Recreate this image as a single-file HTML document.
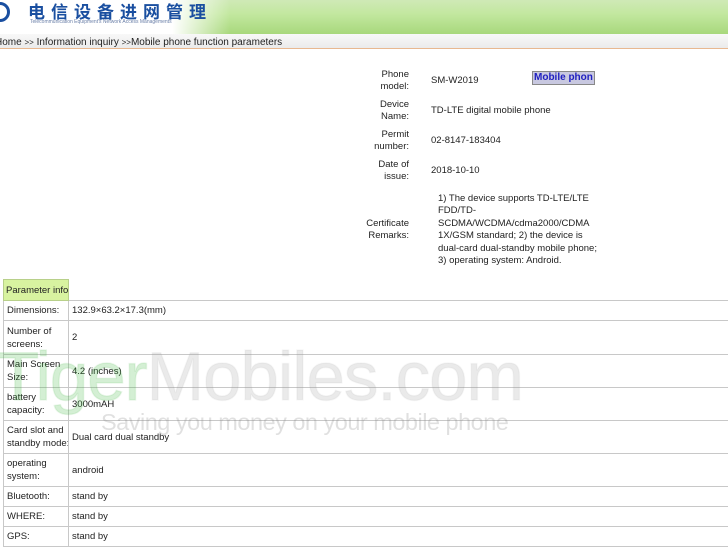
<!DOCTYPE html>
<html><head><meta charset="utf-8"><style>
body{margin:0;width:728px;height:548px;overflow:hidden;background:#fff;font-family:"Liberation Sans",sans-serif;font-size:9.5px;color:#222;position:relative}
.hdr{position:absolute;left:0;top:0;width:728px;height:34px;background:linear-gradient(to bottom,#cfe9b6,#c3e8a0 40%,#a8d87c);}
.hdrw{position:absolute;left:0;top:0;width:230px;height:34px;background:linear-gradient(to right,#fff 75%,rgba(255,255,255,0));}
.logo{position:absolute;left:-10px;top:2px;width:20px;height:20px;border:3px solid #1a4fa0;border-radius:50%;box-sizing:border-box}
.cn{position:absolute;left:28px;top:1px;font-family:"Noto Sans CJK SC",sans-serif;font-weight:bold;color:#1a4fa0;font-size:17px;letter-spacing:6px;line-height:20px}
.en{position:absolute;left:30px;top:19px;font-size:5px;color:#6a7fa8;font-family:"Liberation Sans",sans-serif}
.bc{position:absolute;left:-5px;top:34px;width:740px;height:14px;background:linear-gradient(#f8f8f8,#ebebeb);border-bottom:1px solid #e8b890;font-size:10px;line-height:17px;white-space:nowrap}
.bc span{font-size:8px}
.info{position:absolute;left:360px;top:66px;border-collapse:collapse}
.info td{padding:0;font-size:9.5px;line-height:12.5px;vertical-align:middle}
.info td.l{text-align:right;width:49px;padding-right:22px;height:30px}
.mp{position:absolute;left:532px;top:71px;background:#c8c8e0;border:1px solid #888;color:#2020c0;font-weight:bold;font-size:10px;padding:0 1px;line-height:12px}
table.p{position:absolute;left:3px;top:279px;border-collapse:collapse;width:740px;table-layout:fixed}
table.p td{border:1px solid #c8c8c8;padding:0 3px;font-size:9.5px;line-height:13px;overflow:hidden}
.hd{background:#d8f3a0;border:1px solid #b8d08a!important;height:20px}
.wm{position:absolute;left:-3px;top:337px;font-family:"Liberation Sans",sans-serif;font-size:69px;letter-spacing:-1px;color:rgba(60,180,60,0.22);line-height:80px;white-space:nowrap;-webkit-text-stroke:1.5px rgba(60,180,60,0.1)}
.wm b{font-weight:normal;color:rgba(150,150,150,0.2);-webkit-text-stroke:1.5px rgba(150,150,150,0.08)}
.ws{position:absolute;left:101px;top:409px;font-family:"Liberation Sans",sans-serif;font-size:23.5px;color:rgba(130,130,130,0.25);white-space:nowrap;letter-spacing:-0.5px}
</style></head><body>
<div class="hdr"></div><div class="hdrw"></div>
<div class="logo"></div>
<div class="cn">电信设备进网管理</div>
<div class="en">Telecommunication Equipment's Network Access Managements</div>
<div class="bc">Home <span>&gt;&gt;</span> Information inquiry <span>&gt;&gt;</span>Mobile phone function parameters</div>
<table class="info">
<tr><td class="l">Phone<br>model:</td><td>SM-W2019</td></tr>
<tr><td class="l">Device<br>Name:</td><td>TD-LTE digital mobile phone</td></tr>
<tr><td class="l">Permit<br>number:</td><td>02-8147-183404</td></tr>
<tr><td class="l">Date of<br>issue:</td><td>2018-10-10</td></tr>
<tr><td class="l" style="height:88px">Certificate<br>Remarks:</td><td style="padding-left:7px;width:160px">1) The device supports TD-LTE/LTE FDD/TD-SCDMA/WCDMA/cdma2000/CDMA 1X/GSM standard; 2) the device is dual-card dual-standby mobile phone; 3) operating system: Android.</td></tr>
</table>
<div class="mp">Mobile phon</div>
<table class="p">
<colgroup><col style="width:65px"><col></colgroup>
<tr><td class="hd" style="padding:0 2px;white-space:nowrap">Parameter info</td><td style="border:none;border-bottom:1px solid #c8c8c8"></td></tr>
<tr><td style="height:19px">Dimensions:</td><td>132.9×63.2×17.3(mm)</td></tr>
<tr><td style="height:33px">Number of<br>screens:</td><td>2</td></tr>
<tr><td style="height:32px">Main Screen<br>Size:</td><td>4.2 (inches)</td></tr>
<tr><td style="height:32px">battery<br>capacity:</td><td>3000mAH</td></tr>
<tr><td style="height:32px;white-space:nowrap">Card slot and<br>standby mode:</td><td>Dual card dual standby</td></tr>
<tr><td style="height:32px">operating<br>system:</td><td>android</td></tr>
<tr><td style="height:19px">Bluetooth:</td><td>stand by</td></tr>
<tr><td style="height:19px">WHERE:</td><td>stand by</td></tr>
<tr><td style="height:19px">GPS:</td><td>stand by</td></tr>
</table>
<div class="wm">Tiger<b>Mobiles.com</b></div>
<div class="ws">Saving you money on your mobile phone</div>
</body></html>
